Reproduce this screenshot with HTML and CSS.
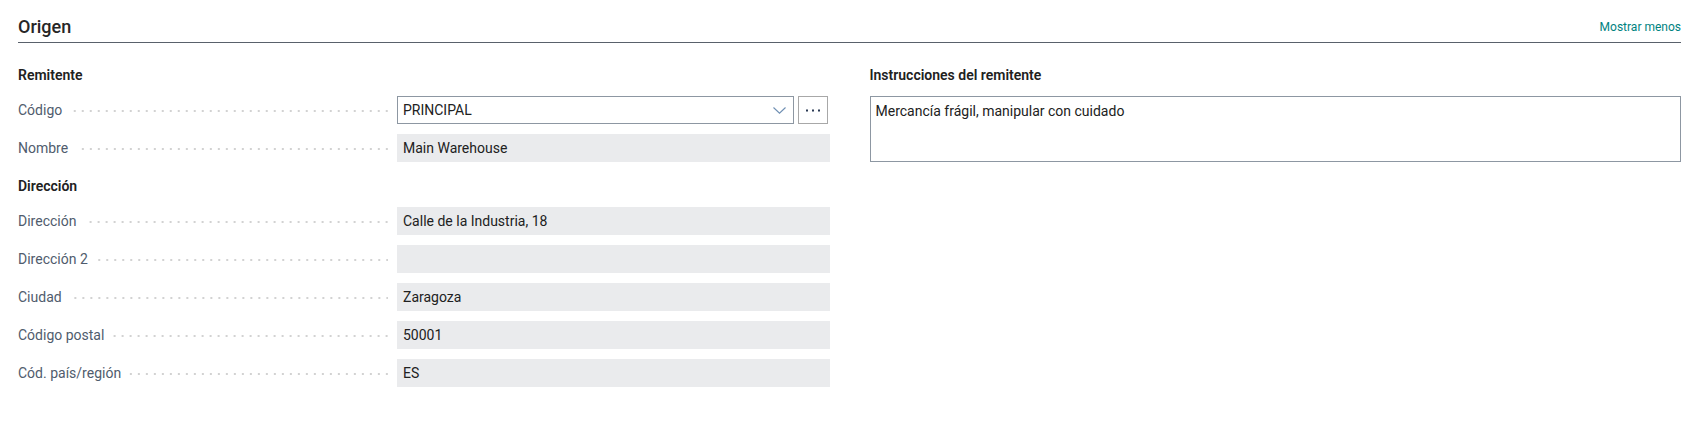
FILE: index.html
```html
<!DOCTYPE html>
<html lang="es">
  <head>
    <meta charset="UTF-8" />
    <meta name="viewport" content="width=device-width, initial-scale=1.0" />
    <title>Origen</title>
    <link rel="stylesheet" href="styles.css">
  </head>
  <body>
    <section class="fasttab">
      <header class="fasttab-header">
        <h2 class="fasttab-title">Origen</h2>
        <a class="show-less" href="#">Mostrar menos</a>
      </header>

      <div class="fasttab-body">
        <div class="column">
          <div class="group">
            <h3 class="group-title">Remitente</h3>
            <div class="field">
              <label class="field-label"><span>Código</span><i class="leader"></i></label>
              <div class="lookup">
                <div class="combo">
                  <span>PRINCIPAL</span>
                  <svg class="chevron" width="13" height="7" viewBox="0 0 13 7">
                    <polyline points="0.5,0.5 6.5,6.2 12.5,0.5" fill="none" stroke="#6f8fb3" stroke-width="1.1" />
                  </svg>
                </div>
                <button class="assist-btn" type="button">
                  <svg width="14" height="3" viewBox="0 0 14 3">
                    <rect x="0" y="0.5" width="2" height="2" fill="#2b3a55" />
                    <rect x="6" y="0.5" width="2" height="2" fill="#2b3a55" />
                    <rect x="12" y="0.5" width="2" height="2" fill="#2b3a55" />
                  </svg>
                </button>
              </div>
            </div>
            <div class="field">
              <label class="field-label"><span>Nombre</span><i class="leader"></i></label>
              <div class="value">Main Warehouse</div>
            </div>
          </div>

          <div class="group">
            <h3 class="group-title">Dirección</h3>
            <div class="field">
              <label class="field-label"><span>Dirección</span><i class="leader"></i></label>
              <div class="value">Calle de la Industria, 18</div>
            </div>
            <div class="field">
              <label class="field-label"><span>Dirección 2</span><i class="leader"></i></label>
              <div class="value"></div>
            </div>
            <div class="field">
              <label class="field-label"><span>Ciudad</span><i class="leader"></i></label>
              <div class="value">Zaragoza</div>
            </div>
            <div class="field">
              <label class="field-label"><span>Código postal</span><i class="leader"></i></label>
              <div class="value">50001</div>
            </div>
            <div class="field">
              <label class="field-label"><span>Cód. país/región</span><i class="leader"></i></label>
              <div class="value">ES</div>
            </div>
          </div>
        </div>

        <div class="column">
          <div class="group">
            <h3 class="group-title">Instrucciones del remitente</h3>
            <div class="memo">Mercancía frágil, manipular con cuidado</div>
          </div>
        </div>
      </div>
    </section>
  </body>
</html>
```

FILE: styles.css
```css
* {
  margin: 0;
  padding: 0;
  box-sizing: border-box;
}

body {
  font-family: "Segoe UI", Roboto, "Liberation Sans", sans-serif;
  font-size: 14px;
  color: #212121;
  background: #fff;
}

.fasttab {
  padding: 0 12px 0 18px;
}

/* caption row with the underline */
.fasttab-header {
  display: flex;
  justify-content: space-between;
  align-items: center;
  height: 43px;
  padding-top: 12px;
  border-bottom: 1px solid #59616b;
}

.fasttab-title {
  font-size: 18px;
  font-weight: 500;
  line-height: 30px;
  color: #262626;
}

.show-less {
  font-size: 12px;
  color: #00827f;
  text-decoration: none;
}

.fasttab-body {
  display: grid;
  grid-template-columns: 1fr 1fr;
  column-gap: 40px;
  padding-top: 22px;
}

/* collapses with the last field's bottom margin */
.group + .group {
  margin-top: 14px;
}

.group-title {
  font-size: 14px;
  font-weight: 600;
  line-height: 20px;
  margin-bottom: 11px;
  color: #212121;
}

.field {
  display: grid;
  grid-template-columns: 370px 1fr;
  column-gap: 9px;
  height: 28px;
  margin-bottom: 10px;
}

.field-label {
  display: flex;
  align-items: center;
  color: #505c6d;
  white-space: nowrap;
}

/* dotted leader between caption and value, dots anchored to the right end */
.leader {
  flex: 1;
  height: 2px;
  margin: 1px 0 0 8px;
  background-image: linear-gradient(to right, transparent 6px, #d2d2d2 6px);
  background-size: 8px 2px;
  background-position: right center;
  background-repeat: repeat-x;
}

.value {
  background: #eaebed;
  padding: 0 6px;
  line-height: 28px;
  white-space: nowrap;
  overflow: hidden;
}

.lookup {
  display: flex;
  gap: 4px;
  margin-right: 2px;
}

.combo {
  flex: 1;
  display: flex;
  align-items: center;
  justify-content: space-between;
  border: 1px solid #8d97a2;
  padding: 0 7px 0 5px;
}

.chevron {
  margin-top: 1px;
}

.assist-btn {
  width: 30px;
  border: 1px solid #a8a8a8;
  background: #fff;
  display: flex;
  align-items: center;
  justify-content: center;
}

.memo {
  height: 66px;
  border: 1px solid #8d97a2;
  padding: 4px 5px;
  line-height: 20px;
}
```
